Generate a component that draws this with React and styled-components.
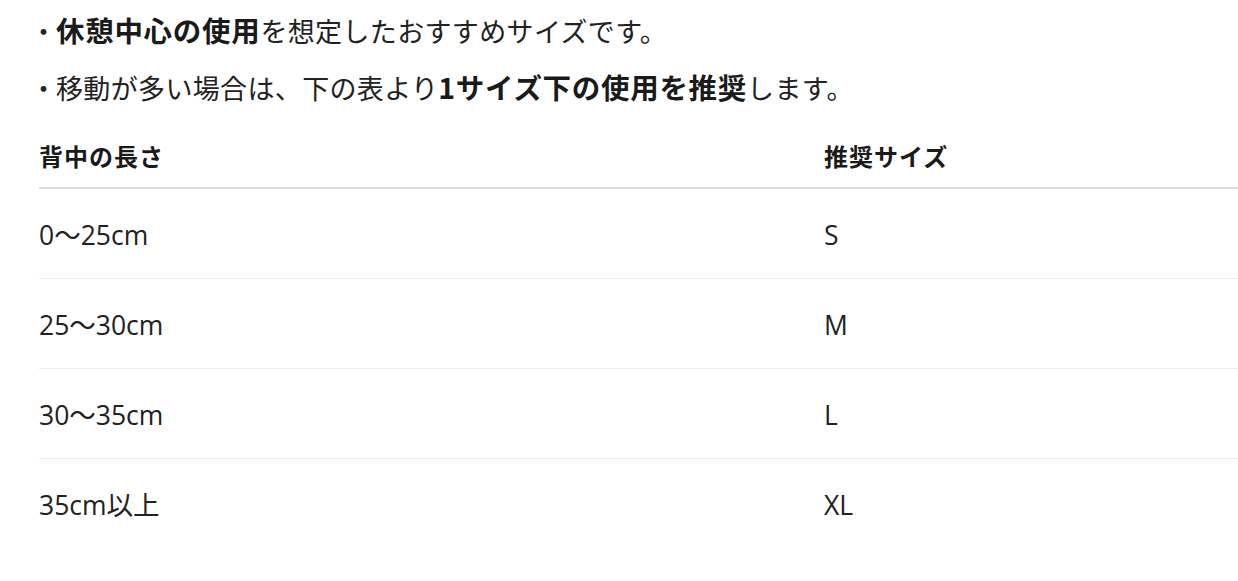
import styled, { createGlobalStyle } from "styled-components";

const GlobalStyle = createGlobalStyle`
  html, body {
    margin: 0;
    padding: 0;
    background: #fff;
  }
  body {
    font-family: "Open Sans", "Noto Sans CJK JP", sans-serif;
    color: #222;
  }
`;

const rows = [
  { length: "0〜25cm", size: "S" },
  { length: "25〜30cm", size: "M" },
  { length: "30〜35cm", size: "L" },
  { length: "35cm以上", size: "XL" },
];

function App() {
  return (
    <>
      <GlobalStyle />
      <Wrapper>
        <Notes>
          <Note>
            <Bullet>・</Bullet>
            <strong>休憩中心の使用</strong>を想定したおすすめサイズです。
          </Note>
          <Note>
            <Bullet>・</Bullet>
            移動が多い場合は、下の表より<strong>1サイズ下の使用を推奨</strong>します。
          </Note>
        </Notes>
        <Table>
          <HeadRow>
            <HeadCell>背中の長さ</HeadCell>
            <HeadCell>推奨サイズ</HeadCell>
          </HeadRow>
          {rows.map((r, i) => (
            <Row key={r.size} $last={i === rows.length - 1}>
              <Cell>{r.length}</Cell>
              <Cell>{r.size}</Cell>
            </Row>
          ))}
        </Table>
      </Wrapper>
    </>
  );
}

const Wrapper = styled.div`
  padding: 11px 0 0 39px;
`;

const Notes = styled.div`
  display: flex;
  flex-direction: column;
  gap: 18px;
`;

const Note = styled.p`
  margin: 0;
  font-family: "Noto Sans CJK JP", sans-serif;
  font-size: 27px;
  letter-spacing: 0.35px;
  line-height: 39px;
  height: 39px;
  color: #222;
  white-space: nowrap;
  strong {
    font-size: 28.5px;
    line-height: 1;
    font-weight: 700;
    letter-spacing: 0.7px;
    color: #1a1a1a;
  }
`;

const Bullet = styled.span`
  display: inline-block;
  width: 27px;
  margin-left: -9px;
  margin-right: -1px;
  text-align: center;
`;

const Table = styled.div`
  margin-top: 12px;
  display: flex;
  flex-direction: column;
`;

const HeadRow = styled.div`
  display: grid;
  grid-template-columns: 785px 1fr;
  padding: 22px 0 16px;
  border-bottom: 2px solid #dcdcdc;
`;

const HeadCell = styled.div`
  font-family: "Noto Sans CJK JP", sans-serif;
  font-size: 24px;
  font-weight: 700;
  line-height: 30px;
  letter-spacing: 1px;
  color: #1a1a1a;
`;

const Row = styled.div`
  display: grid;
  grid-template-columns: 785px 1fr;
  align-items: center;
  height: 90px;
  padding-top: 2px;
  box-sizing: border-box;
  border-bottom: 1px solid ${(p) => (p.$last ? "transparent" : "#ececec")};
`;

const Cell = styled.div`
  font-size: 26.5px;
  line-height: 34px;
  color: #222;
`;

export default App;
